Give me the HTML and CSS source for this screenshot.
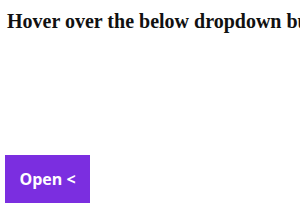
FILE: index.html
```html
<!DOCTYPE html>
<html>
<head>
<meta charset="utf-8">
<link rel="stylesheet" href="styles.css">
</head>
<body>
<h2 class="title">Hover over the below dropdown button to open it</h2>
<div class="dropdown">
  <button class="drop-btn">Open &lt;</button>
</div>
</body>
</html>
```
FILE: styles.css
```css
html, body {
  margin: 0;
  padding: 0;
  background: #ffffff;
  overflow: hidden;
}
body {
  width: 300px;
  height: 210px;
}
.title {
  font-family: "Liberation Serif", serif;
  font-weight: bold;
  font-size: 20px;
  margin: 0;
  padding: 10px 0 0 7px;
  white-space: nowrap;
  overflow: hidden;
  color: #111;
}
.dropdown {
  margin-top: 122px;
  padding-left: 5px;
}
.drop-btn {
  background: #7b2ee0;
  color: #fff;
  border: none;
  width: 85px;
  height: 48px;
  font-family: "Open Sans", sans-serif;
  font-weight: bold;
  font-size: 16px;
  padding: 0;
}
```
